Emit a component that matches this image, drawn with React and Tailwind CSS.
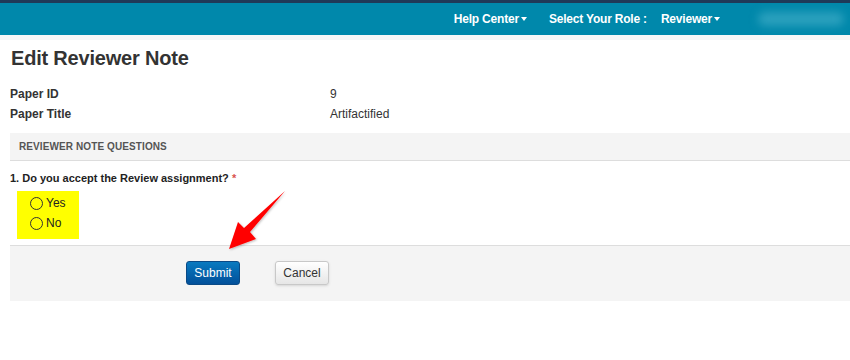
import React from 'react';

const font = { fontFamily: '"Liberation Sans", Arial, sans-serif' };

function Caret() {
  return <span className="ml-[2px] inline-block w-0 h-0 border-x-[3px] border-x-transparent border-t-[4px] border-t-white align-middle" />;
}

function Radio({ label }) {
  return (
    <label className="flex items-center gap-[3px] h-[20px]">
      <span className="w-[13px] h-[13px] rounded-full border border-[#333] bg-transparent" />
      <span className="text-[12px] text-[#222]">{label}</span>
    </label>
  );
}

export default function App() {
  return (
    <div className="relative w-[850px] h-[360px] bg-white overflow-hidden text-[#333]" style={font}>
      {/* top bar */}
      <div className="h-[3px] bg-[#1f3a58]" />
      <div className="h-[32px] bg-[#0088ab] flex items-center justify-end pr-[6px] text-white text-[12px] font-bold tracking-[-0.2px]">
        <span className="flex items-center">Help Center<Caret /></span>
        <span className="ml-[22px]">Select Your Role :</span>
        <span className="ml-[14px] flex items-center">Reviewer<Caret /></span>
        <span className="ml-[38px] w-[86px] h-[14px] rounded-full bg-[#2aa0bd] blur-[4px]" />
      </div>
      <div className="h-[5px] bg-[#f7f7f7]" />

      <div className="pl-[10px]">
        <h1 className="pt-[6px] pl-[1px] text-[20px] leading-[24px] font-bold text-[#333] tracking-[-0.2px]">Edit Reviewer Note</h1>

        <div className="mt-[14px] grid grid-cols-[320px_1fr] text-[12px] leading-[20px]">
          <div className="font-bold">Paper ID</div>
          <div>9</div>
          <div className="font-bold">Paper Title</div>
          <div>Artifactified</div>
        </div>

        <div className="mt-[9px] h-[28px] bg-[#f4f4f4] border-b border-[#dddddd] flex items-center pl-[9px] text-[10px] font-bold text-[#555] tracking-[0.1px]">
          REVIEWER NOTE QUESTIONS
        </div>

        <div className="mt-[10px] text-[11px] leading-[14px] font-bold text-[#222]">
          1. Do you accept the Review assignment? <span className="text-[#d9534f]">*</span>
        </div>

        <div className="mt-[6px] ml-[7px] w-[62px] h-[48px] bg-[#ffff00] pl-[13px] pt-[2px] flex flex-col">
          <Radio label="Yes" />
          <Radio label="No" />
        </div>

        <div className="mt-[6px] h-[56px] bg-[#f4f4f4] border-t border-[#dddddd] flex items-start pt-[15px] pl-[176px] gap-[35px]">
          <button className="w-[54px] h-[24px] rounded-[3px] bg-gradient-to-b from-[#0a7ac0] to-[#03509a] border border-[#0a4a86] text-white text-[12px]">
            Submit
          </button>
          <button className="w-[54px] h-[24px] rounded-[3px] bg-gradient-to-b from-white to-[#e6e6e6] border border-[#c8c8c8] text-[#333] text-[12px] shadow-sm">
            Cancel
          </button>
        </div>
      </div>

      {/* red annotation arrow */}
      <svg className="absolute left-0 top-0" width="850" height="360" viewBox="0 0 850 360">
        <defs>
          <filter id="sh" x="-20%" y="-20%" width="140%" height="140%">
            <feDropShadow dx="1" dy="1" stdDeviation="1" floodColor="#000" floodOpacity="0.25" />
          </filter>
        </defs>
        <polygon
          points="285,191 250,232 256,239 229,249 238,222 244,228"
          fill="#ff0000"
          filter="url(#sh)"
        />
      </svg>
    </div>
  );
}
